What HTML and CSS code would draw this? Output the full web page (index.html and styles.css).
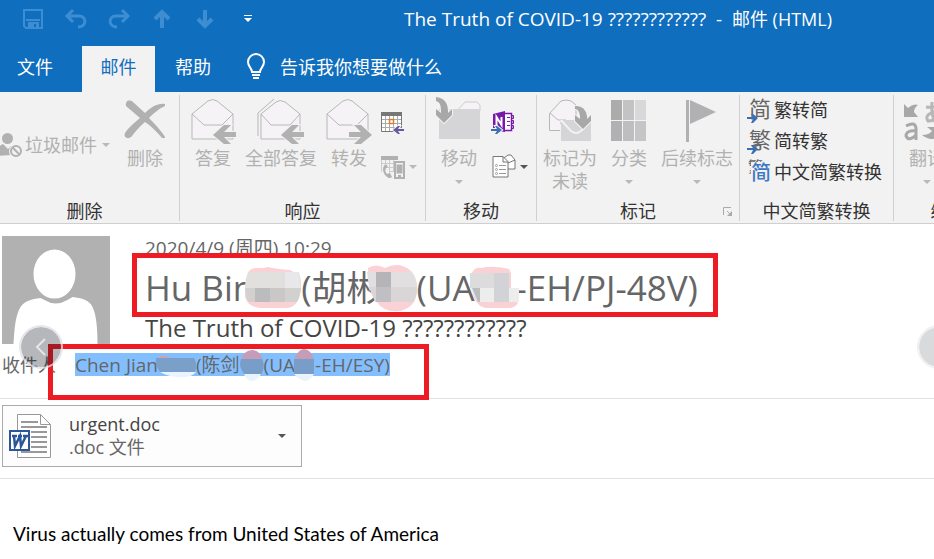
FILE: index.html
```
<!DOCTYPE html>
<html lang="zh-CN">
<head>
<meta charset="utf-8">
<title>The Truth of COVID-19 ???????????? - 邮件 (HTML)</title>
<link rel="stylesheet" href="styles.css">
</head>
<body>
<header class="top">
  <div class="titlebar">
    <div class="quick">
      <button class="tool" aria-label="保存"><svg width="20" height="20" viewBox="0 0 20 20"><path d="M1 1h18v18H3l-2-2z" fill="none" stroke="currentColor" stroke-width="2"/><path d="M3 10h14v2H3zM5 13h11v6h-3v-4h-2v4H5z" fill="currentColor"/></svg></button>
      <button class="tool" aria-label="撤消"><svg width="22" height="20" viewBox="0 0 22 20"><path d="M2 7h12c8 0 8 11-1 11M8 1L2 7l6 6" fill="none" stroke="currentColor" stroke-width="3"/></svg></button>
      <button class="tool" aria-label="恢复"><svg width="22" height="20" viewBox="0 0 22 20"><path d="M20 7H8c-8 0-8 11 1 11M14 1l6 6-6 6" fill="none" stroke="currentColor" stroke-width="3"/></svg></button>
      <button class="tool" aria-label="上一项"><svg width="16" height="20" viewBox="0 0 16 20"><path d="M8 19V3M1 10l7-7 7 7" fill="none" stroke="currentColor" stroke-width="4"/></svg></button>
      <button class="tool" aria-label="下一项"><svg width="16" height="20" viewBox="0 0 16 20"><path d="M8 1v16M1 10l7 7 7-7" fill="none" stroke="currentColor" stroke-width="4"/></svg></button>
      <button class="tool more" aria-label="自定义"><svg width="8" height="8" viewBox="0 0 8 8"><path d="M0 0h8v1H0zM0 3h8L4 7z" fill="currentColor"/></svg></button>
    </div>
    <div class="caption">The Truth of COVID-19 ????????????&nbsp; -&nbsp; <span class="app">邮件 (HTML)</span></div>
  </div>
  <nav class="tabs">
    <button class="tab">文件</button>
    <button class="tab active">邮件</button>
    <button class="tab">帮助</button>
    <button class="tell"><svg width="20" height="26" viewBox="0 0 20 26"><path d="M6 18c0-4-4-5-4-10a8 8 0 0 1 16 0c0 5-4 6-4 10zM6 21h8" fill="none" stroke="currentColor" stroke-width="2"/><path d="M7 23h6v2H7z" fill="currentColor"/></svg>告诉我你想要做什么</button>
  </nav>
</header>

<section class="ribbon" aria-label="功能区">
  <div class="group g-delete">
    <div class="items">
      <button class="junk"><svg width="22" height="26" viewBox="0 0 22 26"><circle cx="7.500" cy="6.500" r="5.500" fill="#b1b1b1"/><path d="M-2 24v-8q2-3 5-4l5 5 3-3v9z" fill="#b1b1b1"/><circle cx="16" cy="19" r="7" fill="#f2f2f2"/><circle cx="16" cy="19" r="5" fill="none" stroke="#b1b1b1" stroke-width="2"/><path d="M12.500 15.500l7 7" stroke="#b1b1b1" stroke-width="2"/></svg>垃圾邮件<i class="caret"></i></button>
      <button class="big"><svg width="44" height="48" viewBox="0 0 44 48"><path d="M3 11C2 6 6 4 10 7l12 11C28 12 35 8 42 9v2C35 14 30 19 26 23c8 8 13 14 16 19v1h-3C34 37 28 31 22 27 16 32 12 37 9 41c-3 4-9 2-7-3 3-5 9-10 15-15z" fill="#b1b1b1"/></svg><span>删除</span></button>
    </div>
    <div class="name">删除</div>
  </div>

  <div class="group g-respond">
    <div class="items">
      <button class="big"><svg width="46" height="48" viewBox="0 0 46 48"><path d="M2 19L18 6q5-3 9 0l16 13v25H2z" fill="#f6f3f7" stroke="#b7b7b7"/><path d="M2 19l12 11h18l11-11" fill="none" stroke="#b7b7b7"/><path d="M23 40L34 30h7l-7 7h12v5H34l7 7h-7z" fill="#b1b1b1" stroke="#f2f2f2" stroke-width="2" paint-order="stroke"/></svg><span>答复</span></button>
      <button class="big"><svg width="48" height="48" viewBox="0 0 48 48"><path d="M1 41V18L17 4" fill="none" stroke="#b7b7b7"/><path d="M4 19L19 7q4-3 9 0l15 12v25H4z" fill="#f6f3f7" stroke="#b7b7b7"/><path d="M4 19l10 11h19l10-11" fill="none" stroke="#b7b7b7"/><path d="M24 40l11-10h7l-7 7h12v5H35l7 7h-7z" fill="#b1b1b1" stroke="#f2f2f2" stroke-width="2" paint-order="stroke"/></svg><span>全部答复</span></button>
      <button class="big"><svg width="46" height="48" viewBox="0 0 46 48"><path d="M1 19L17 6q5-3 9 0l16 13v25H1z" fill="#f6f3f7" stroke="#b7b7b7"/><path d="M1 19l12 11h18l11-11" fill="none" stroke="#b7b7b7"/><path d="M46 40L35 30h-7l7 7H23v5h12l-7 7h7z" fill="#b1b1b1" stroke="#f2f2f2" stroke-width="2" paint-order="stroke"/></svg><span>转发</span></button>
      <div class="smalls">
        <button class="small" aria-label="会议"><svg width="24" height="24" viewBox="0 0 24 24"><path d="M.5 4v16.500h20V4z" fill="#fff" stroke="#777"/><path d="M0 1h21v4H0z" fill="#777"/><path d="M4.500 5v15M8.500 5v15M12.500 5v15M16.500 5v15M1 8.500h19M1 12.500h19M1 16.500h19" stroke="#aaa"/><path d="M8.500 8.500h4v4h-4z" fill="#fff" stroke="#d98236" stroke-width="1.500"/><path d="M12 19l5-4h2l-2 3h6v2h-6l2 3h-2z" fill="#655a9e" stroke="#f2f2f2" stroke-width="2" paint-order="stroke"/></svg></button>
        <button class="small" aria-label="其他"><svg width="24" height="24" viewBox="0 0 24 24"><path d="M0 1h17v4H0z" fill="#b1b1b1"/><path d="M.5 5v12M4.500 5v3M8.500 5v13M12.500 5v12M1 8.500h16M5 12.500h8M9 16.500h4" fill="none" stroke="#ccc"/><path d="M5 9C1 11 1 17 5 21c2 2 4 3 6 1l-2-4-3 1c-2-2-2-4-1-6l2-1z" fill="#b1b1b1"/><path d="M14 7h9v16h-9z" fill="#f2f2f2" stroke="#b1b1b1" stroke-width="2"/><path d="M15.500 9.500h6v9h-6zM17 20h3v2h-3z" fill="#b1b1b1"/></svg><i class="caret"></i></button>
      </div>
    </div>
    <div class="name">响应</div>
  </div>

  <div class="group g-move">
    <div class="items">
      <button class="big"><svg width="46" height="48" viewBox="0 0 46 48"><path d="M21 16l8-9h12l3 3v6z" fill="#f6f3f7" stroke="#ccc"/><path d="M3 14h41v30H3z" fill="#d5d4d6"/><path d="M0 2q11 1 12 13v3l4-4v6l-8 8-8-8v-6l5 4v-3Q5 7 0 6z" fill="#a8a8a8" stroke="#f2f2f2" stroke-width="2" paint-order="stroke"/></svg><span>移动</span><i class="caret"></i></button>
      <div class="smalls">
        <button class="small" aria-label="OneNote"><svg width="24" height="24" viewBox="0 0 24 24"><path d="M12 2.500h7.500v17H12z" fill="#fff" stroke="#7719aa" stroke-width="1.500"/><path d="M20 4.500h1.500v3H20zM20 9.500h1.500v3H20zM20 14.500h1.500v3H20z" fill="#fff" stroke="#7719aa"/><path d="M15 6.500h3M15 10.500h3M15 14.500h3" stroke="#7719aa"/><path d="M1 3L13 0v21L1 19z" fill="#7719aa"/><path d="M4.500 15V6l5 8V6" fill="none" stroke="#fff" stroke-width="2"/><path d="M-1 18h6l-2-3h2l5 4-5 4H3l2-3h-6z" fill="#3c6eb4" stroke="#f2f2f2" stroke-width="2" paint-order="stroke"/></svg></button>
        <button class="small" aria-label="规则"><svg width="24" height="24" viewBox="0 0 24 24"><path d="M12 7V3l4-3h3l4 5v9h-7z" fill="#fff" stroke="#777"/><path d="M12 3l4 5 7-3" fill="none" stroke="#777"/><path d="M1 1.500h10l5 5V22H1z" fill="#fff" stroke="#777" stroke-width="1"/><path d="M11 1.500V7h5" fill="none" stroke="#777"/><path d="M7 10.500h7M7 14.500h7M7 18.500h7" stroke="#999"/><g fill="none" stroke="#999"><circle cx="4.500" cy="10.500" r="1"/><circle cx="4.500" cy="14.500" r="1"/><circle cx="4.500" cy="18.500" r="1"/></g></svg><i class="caret dark"></i></button>
      </div>
    </div>
    <div class="name">移动</div>
  </div>

  <div class="group g-mark">
    <div class="items">
      <button class="big"><svg width="44" height="48" viewBox="0 0 44 48"><path d="M12 35.500H1.500v-17L13 6q5-2 10 0l5 4v18H12" fill="#f6f3f7" stroke="#b7b7b7"/><path d="M2 18l8 7h8" fill="none" stroke="#b7b7b7"/><path d="M13 25h30v21H13z" fill="#d5d4d6"/><path d="M13 25l10 11q5 4 10 0l10-11" fill="none" stroke="#f2f2f2" stroke-width="2"/><path d="M27 11q10-1 12 10v3l4-4v6l-8 8-8-8v-6l5 4v-3q-1-7-5-7z" fill="#a8a8a8" stroke="#f2f2f2" stroke-width="2" paint-order="stroke"/></svg><span>标记为<br>未读</span></button>
      <button class="big"><svg width="36" height="48" viewBox="0 0 36 48"><path d="M0 5h11v20H0z" fill="#adacad"/><path d="M12 5h11v20H12z" fill="#c4c3c4"/><path d="M24 5h11v20H24z" fill="#d8d7d9"/><path d="M0 26h11v20H0z" fill="#b1b0b2"/><path d="M12 26h11v20H12z" fill="#bebdc0"/><path d="M24 26h11v20H24z" fill="#c5c4c7"/></svg><span>分类</span><i class="caret"></i></button>
      <button class="big"><svg class="flag" width="22" height="48" viewBox="0 0 22 48"><path d="M0 5h3v42H0zM4 5l26 12L4 29z" fill="#b1b0b2"/></svg><span>后续标志</span><i class="caret"></i></button>
    </div>
    <div class="name">标记</div>
    <button class="launcher" aria-label="标记选项"><svg width="10" height="10" viewBox="0 0 10 10"><path d="M.5 8V.5H8M4 4l3 3" fill="none" stroke="#aaa"/><path d="M9 4v5H4z" fill="#aaa"/></svg></button>
  </div>

  <div class="group g-convert">
    <div class="items rows">
      <button class="row"><span class="glyph">简<svg width="11" height="9" viewBox="0 0 11 9"><path d="M0 3h6L4 0h2l5 4-5 5H4l2-4H0z" fill="#3c6eb4"/></svg></span>繁转简</button>
      <button class="row"><span class="glyph">繁<svg width="11" height="9" viewBox="0 0 11 9"><path d="M0 3h6L4 0h2l5 4-5 5H4l2-4H0z" fill="#3c6eb4"/></svg></span>简转繁</button>
      <button class="row"><span class="glyph pair"><small>繁</small><b>简</b></span>中文简繁转换</button>
    </div>
    <div class="name">中文简繁转换</div>
  </div>

  <div class="group g-edit">
    <div class="items">
      <button class="big"><svg width="48" height="48" viewBox="0 0 48 48"><path d="M1 9l4 4q5-5 10-3-4 3-4 7l4 5H1z" fill="#a8a8a8"/><path d="M23 12q9 1 15-2M29 7q-1 13 3 20M36 15q-4 12-11 11-4-6 6-9 9-2 10 4 0 5-6 7" fill="none" stroke="#b7b7b7" stroke-width="3"/><path d="M3 31q9-5 10 2v12M13 36q-10-1-10 5 3 6 10-1" fill="none" stroke="#a8a8a8" stroke-width="3"/><path d="M19 40q7 0 10-4l-5-4h14v14l-4-4q-6 5-15-2z" fill="#a8a8a8"/></svg><span>翻译</span><i class="caret"></i></button>
    </div>
    <div class="name">编辑</div>
  </div>
</section>

<main class="mail">
  <section class="heading">
    <svg class="avatar" width="108" height="108" viewBox="0 0 108 108" role="img" aria-label="发件人"><path d="M0 0h108v108H0z" fill="#b1b1b1"/><path d="M11.500 108c1-16 2-29 7-37 4-6 11-8 20-9l4 2q11 7 23 0l5-3c9 1 17 3 20 10 4 8 5 22 5 37z" fill="#fff"/><ellipse cx="52.500" cy="38" rx="22.500" ry="26" fill="#fff" stroke="#b1b1b1" stroke-width="3"/></svg>
    <div class="facts">
      <div class="date">2020/4/9 (周四) 10:29</div>
      <h1 class="sender">
        <span>Hu Bin</span><svg class="mask m1" width="56" height="44" viewBox="0 0 56 44"><path d="M2 9C6-2 15 4 23 1q8 2 22 3 12 5 11 18-2 19-14 20H18Q3 42 0 31z" fill="#fad1d4"/><path d="M4 6h50l2 9v7H0q0-11 4-16z" fill="#e1e0df"/><path d="M0 22h56q-1 10-4 14H4q-4-4-4-14z" fill="#d2d1d0"/><path d="M10 22h15v14H10z" fill="#bcbcbe"/><path d="M25 22h15v14H25z" fill="#c9c8c7"/><path d="M40 6h14l1 16H40z" fill="#e8e8ea"/></svg><span>(胡彬</span><svg class="mask m2" width="50" height="46" viewBox="0 0 50 46"><path d="M1 3q8-5 17 0 14-7 26 3 6 8 6 18 0 18-17 22-16 2-23-9Q3 28 2 20z" fill="#fad1d4"/><path d="M0 7h45q5 7 5 15H2z" fill="#e1dfdf"/><path d="M2 22h48q0 10-4 15H8z" fill="#dad6d7"/><path d="M9 7h15v15H9z" fill="#b5b5b7"/><path d="M9 22h15v15H9z" fill="#bfbfc4"/></svg><span>(UA</span><svg class="mask m3" width="50" height="44" viewBox="0 0 50 44"><path d="M1 10Q3 0 12 2q9-3 27 1l2 4v23l7 7q-3 5-9 5H16Q6 41 2 25z" fill="#fad1d4"/><path d="M0 7h39v15H0z" fill="#dcdcdd"/><path d="M0 22h49v14H8z" fill="#ededee"/><path d="M24 7h15v29H24z" fill="#d2d3d6"/><path d="M2 22h8v14H8z" fill="#bdbdbd"/></svg><span>-EH/PJ-48V)</span>
        <i class="frame frame-sender"></i>
      </h1>
      <div class="subject">The Truth of COVID-19 ????????????</div>
    </div>
  </section>
  <div class="to">
    <span class="to-label">收件人</span>
    <span class="recipient"><span>Chen Jian</span><svg class="mask s1" width="40" height="24" viewBox="0 0 40 24"><path d="M0 7q7-9 16 0z" fill="#cba1b4"/><path d="M0 5h38q4 6 1 14H4Q-1 12 0 5z" fill="#7a9fc9"/><path d="M4 19h36q-4 5-12 5-14 1-24-5z" fill="#e9f4ff"/></svg><span>(陈剑</span><svg class="mask s2" width="24" height="32" viewBox="0 0 24 32"><path d="M1 11Q4 1 12 1t11 10z" fill="#c59db9"/><path d="M1 10h21q4 8-1 16H5Q-2 18 1 10z" fill="#789dc8"/><path d="M4 25h17q-4 7-9 7t-8-7z" fill="#e9f4ff"/></svg><span>(UA</span><svg class="mask s3" width="22" height="32" viewBox="0 0 22 32"><path d="M1 11Q4 1 11 0q8 1 10 11z" fill="#c59db9"/><path d="M1 10h20v15H1z" fill="#789dc8"/><path d="M1 25h20q-4 7-9 7-6-1-11-7z" fill="#e9f4ff"/></svg><span>-EH/ESY)</span></span>
    <i class="frame frame-to"></i>
  </div>
  <section class="attachments">
    <button class="file"><svg width="42" height="46" viewBox="0 0 42 46"><path d="M8.500 1.500h23l10 10v33h-33z" fill="#fff" stroke="#999"/><path d="M31.500 1.500v10h10" fill="none" stroke="#999"/><path d="M12 9h17M12 14h26M22 19h16M22 24h16M22 29h16M22 34h16M12 39h26" stroke="#999" stroke-width="2"/><path d="M0 17h21v21H0z" fill="#2b579a"/><path d="M2 19h17v17H2z" fill="#fff"/><path d="M3 23h5M9 23h4M14 23h5M5 23l1 10 5-10 1 10 5-10" fill="none" stroke="#2b579a" stroke-width="2.500"/></svg>
      <span class="file-text"><span>urgent.doc</span><span class="kind">.doc 文件</span></span><i class="caret dark"></i></button>
  </section>
  <p class="message">Virus actually comes from United States of America</p>
  <button class="step prev" aria-label="上一张"><svg width="10" height="18" viewBox="0 0 10 18"><path d="M9 1L1 9l8 8" fill="none" stroke="#e6e6ea" stroke-width="2"/></svg></button>
  <button class="step next" aria-label="下一张"></button>
</main>
</body>
</html>
```
FILE: styles.css
```
* { box-sizing: border-box; }
body {
  margin: 0;
  overflow: hidden;
  background: #fff;
  color: #444;
  font: 18px/24px "Open Sans", "Noto Sans CJK SC", sans-serif;
}
button {
  margin: 0;
  padding: 0;
  border: 0;
  background: none;
  color: inherit;
  font: inherit;
  white-space: nowrap;
}
svg { display: block; flex: none; overflow: visible; }

.top { background: #106ebe; color: #fff; }
.titlebar { display: flex; align-items: center; height: 46px; padding-bottom: 8px; }
.quick { display: flex; align-items: center; gap: 23px; padding-left: 23px; color: #3c8dd2; }
.tool { display: flex; justify-content: center; width: 20px; }
.more { color: #fff; }
.caption { flex: 1; padding-left: 146px; font-size: 19px; white-space: nowrap; }
.app { font-size: 18px; }
.tabs { display: flex; height: 46px; padding-left: 8px; }
.tab { width: 54px; margin-right: 20px; padding-bottom: 4px; }
.tab.active { width: 73px; margin-right: 11px; background: #f2f2f2; color: #106ebe; }
.tell { display: flex; align-items: center; gap: 14px; padding: 0 0 4px 6px; }

.ribbon {
  display: flex;
  height: 132px;
  overflow: hidden;
  border-bottom: 1px solid #cfcfcf;
  background: #f2f2f2;
}
.group {
  position: relative;
  display: flex;
  flex: none;
  flex-direction: column;
  justify-content: space-between;
  margin: 3px 0 2px;
  border-right: 1px solid #d0d0d0;
}
.items { display: flex; align-items: flex-start; color: #b1b1b1; }
.name { color: #333; text-align: center; line-height: 20px; }
.g-delete { width: 180px; padding-right: 10px; }
.g-respond { width: 246px; }
.g-move { width: 111px; }
.g-mark { width: 203px; }
.g-convert { width: 154px; }
.g-edit { width: 110px; }
.big { display: flex; flex-direction: column; align-items: center; line-height: 23px; }
.big span { display: block; margin-top: 4px; }
.big .caret { margin-top: 10px; }
.caret { flex: none; border: 4px solid transparent; border-top-color: #b9b9b9; border-bottom: 0; }
.caret.dark { border-top-color: #555; }
.junk { display: flex; align-items: center; gap: 3px; margin-top: 37px; }
.junk .caret { margin-left: 2px; }
.g-delete .items { gap: 13px; }
.g-respond .items { gap: 9px; padding-left: 10px; }
.smalls { display: flex; flex-direction: column; gap: 20px; padding-top: 16px; }
.small { display: flex; align-items: center; gap: 4px; height: 24px; }
.g-move .items { gap: 10px; padding-left: 10px; }
.g-mark .items { gap: 14px; padding-left: 6px; }
.launcher { position: absolute; right: 6px; bottom: 4px; }
.rows { flex-direction: column; padding-left: 7px; color: #333; }
.row { display: flex; align-items: center; gap: 3px; height: 31px; padding-bottom: 2px; }
.glyph { position: relative; width: 24px; height: 31px; color: #666; font-size: 22px; line-height: 28px; text-align: right; }
.glyph svg { position: absolute; left: 0; bottom: 2px; }
.pair small { position: absolute; left: 1px; top: 0; font-size: 15px; line-height: 20px; }
.pair b { position: absolute; right: 0; top: 6px; background: #f2f2f2; color: #3c78c3; font-size: 20px; font-weight: 500; line-height: 22px; }
.g-edit .items { padding-left: 9px; }

.mail { position: relative; }
.heading { display: flex; gap: 35px; padding: 12px 2px 0; }
.avatar { flex: none; }
.facts { min-width: 0; color: #666; white-space: nowrap; }
.date { font-size: 19px; line-height: 24px; }
.sender { position: relative; display: flex; align-items: center; width: max-content; margin: 0; font-size: 35px; font-weight: 400; line-height: 56px; }
.subject { color: #444; font-size: 24px; line-height: 24px; }
.mask { position: relative; z-index: 1; }
.m1 { margin-left: -9px; }
.m2 { margin-left: -15px; }
.m3 { margin: 0 -4px 0 -5px; }
.s1, .s3 { margin-left: -2px; }
.frame { position: absolute; border: 5px solid #ed1c24; }
.frame-sender { left: -13px; right: -20px; top: -7px; height: 64px; }
.to { position: relative; display: flex; align-items: center; gap: 19px; height: 55px; padding: 0 2px 13px; border-bottom: 1px solid #e1e1e1; color: #666; white-space: nowrap; }
.recipient { display: flex; align-items: center; height: 23px; background: #83bfff; font-size: 19px; }
.to-label { width: 54px; }
.frame-to { left: 48px; top: 0; width: 381px; height: 56px; }
.attachments { padding: 6px 2px 11px; border-bottom: 1px solid #e1e1e1; }
.file { display: flex; align-items: center; width: 300px; height: 62px; padding: 0 15px 0 6px; border: 1px solid #aaa; background: #fdfdfd; text-align: left; }
.file-text { display: flex; flex: 1; flex-direction: column; padding-left: 18px; line-height: 23px; }
.kind { color: #666; }
.message { margin: 43px 13px 0; color: #000; font-family: Lato, sans-serif; font-size: 19px; line-height: 24px; }
.step { position: absolute; top: 101px; z-index: 2; display: flex; align-items: center; justify-content: center; width: 44px; height: 44px; border: 2px solid rgba(225, 225, 230, .8); border-radius: 50%; background: rgba(10, 15, 30, .3); background-clip: padding-box; }
.prev { left: 19px; }
.next { right: -27px; border-color: #f0f0f1; background-color: #d9dadc; }
```
